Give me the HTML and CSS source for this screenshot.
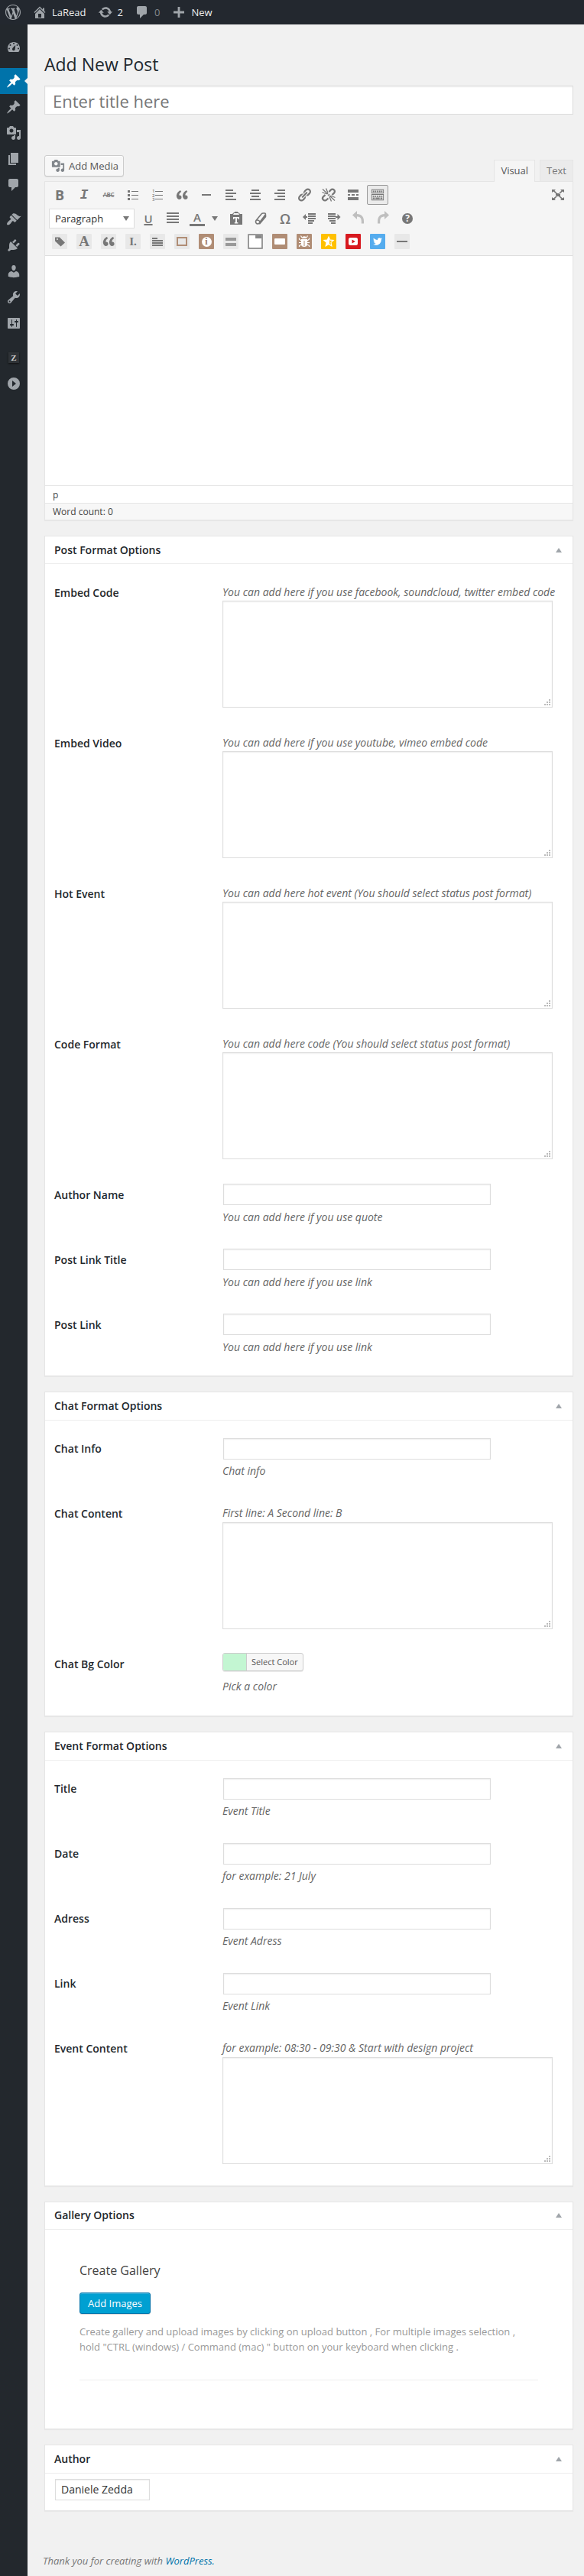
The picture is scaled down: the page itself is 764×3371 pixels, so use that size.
FILE: index.html
```html
<!DOCTYPE html>
<html lang="en">
<head>
<meta charset="utf-8">
<title>Add New Post</title>
<link rel="stylesheet" href="styles.css">
</head>
<body>
<svg class="sprite" width="0" height="0" aria-hidden="true">
  <symbol id="pin" viewBox="0 0 20 20"><path d="M10.44 3.02l1.82-1.82 6.36 6.35-1.83 1.82c-1.05-.68-2.48-.57-3.41.36l-.75.75c-.92.93-1.04 2.35-.35 3.41l-1.83 1.82-2.41-2.41-2.8 2.79c-.42.42-3.38 2.71-3.8 2.29s1.86-3.39 2.28-3.81l2.79-2.79L4.1 9.36l1.83-1.82c1.05.69 2.48.57 3.4-.36l.75-.75c.93-.92 1.05-2.35.36-3.41z"/></symbol>
  <symbol id="media" viewBox="0 0 20 20"><path fill-rule="evenodd" d="M13 11V4c0-.55-.45-1-1-1h-1.670L9 1H5L3.670 3H2c-.55 0-1 .45-1 1v7c0 .55.45 1 1 1h10c.55 0 1-.45 1-1zM7 4.500c1.380 0 2.500 1.120 2.500 2.500S8.380 9.500 7 9.500 4.500 8.380 4.500 7 5.620 4.500 7 4.500zM14 6h5v10.500c0 1.380-1.120 2.500-2.500 2.500S14 17.880 14 16.500s1.120-2.500 2.500-2.500c.17 0 .34.020.5.050V9h-3V6zm-4 8.050V13h2v3.500c0 1.380-1.120 2.500-2.500 2.500S7 17.880 7 16.500 8.120 14 9.500 14c.17 0 .34.020.5.050z"/></symbol>
  <symbol id="comment" viewBox="0 0 20 20"><path d="M5 2h9c1.100 0 2 .9 2 2v7c0 1.100-.9 2-2 2h-2l-5 5v-5H5c-1.100 0-2-.9-2-2V4c0-1.100.9-2 2-2z"/></symbol>
  <symbol id="quote" viewBox="0 0 20 20"><path d="M9.490 13.220c0-.74-.2-1.380-.61-1.900-.62-.78-1.830-.88-2.530-.72-.29-1.650 1.110-3.750 2.920-4.650L7.880 4c-2.730 1.300-5.420 4.280-4.960 8.050C3.210 14.430 4.590 16 6.540 16c.85 0 1.560-.25 2.120-.75s.83-1.180.83-2.030zm8.050 0c0-.74-.2-1.380-.61-1.900-.63-.78-1.830-.88-2.530-.72-.29-1.650 1.110-3.750 2.920-4.650L15.930 4c-2.730 1.300-5.410 4.280-4.950 8.050.29 2.380 1.660 3.950 3.610 3.950.85 0 1.560-.25 2.120-.75s.83-1.180.83-2.030z"/></symbol>
  <symbol id="grip" viewBox="0 0 10 9"><path d="M7 0h2v2H7zM4 3h2v2H4zM7 3h2v2H7zM1 6h2v2H1zM4 6h2v2H4zM7 6h2v2H7z"/></symbol>
</svg>

<header class="adminbar">
  <a class="bar-item bar-wp"><svg class="i20" viewBox="0 0 20 20"><path d="M20 10c0-5.510-4.490-10-10-10C4.480 0 0 4.490 0 10c0 5.520 4.480 10 10 10 5.510 0 10-4.480 10-10zM7.780 15.370L4.370 6.220c.55-.02 1.170-.08 1.170-.08.5-.06.44-1.130-.06-1.110 0 0-1.450.11-2.370.11-.18 0-.37 0-.58-.01C4.120 2.690 6.870 1.110 10 1.110c2.330 0 4.450.87 6.050 2.340-.68-.11-1.650.39-1.650 1.580 0 .74.45 1.360.9 2.100.35.61.55 1.360.55 2.460 0 1.490-1.400 5-1.400 5l-3.030-8.370c.54-.02.82-.17.82-.17.5-.05.44-1.250-.06-1.220 0 0-1.440.12-2.380.12-.87 0-2.330-.12-2.330-.12-.5-.03-.56 1.200-.06 1.220l.92.08 1.260 3.410zM17.410 10c.24-.64.74-1.870.43-4.250.7 1.290 1.050 2.710 1.050 4.250 0 3.290-1.730 6.240-4.400 7.780.97-2.590 1.940-5.200 2.920-7.780zM6.100 18.090C3.120 16.650 1.110 13.530 1.110 10c0-1.300.23-2.480.72-3.590C3.250 10.300 4.670 14.200 6.100 18.090zm4.030-6.630l2.580 6.980c-.86.29-1.760.45-2.710.45-.79 0-1.570-.11-2.290-.33.81-2.380 1.620-4.740 2.420-7.100z"/></svg></a>
  <a class="bar-item bar-site"><svg class="i20" viewBox="0 0 20 20"><path fill-rule="evenodd" d="M16 8.500l1.530 1.530-1.060 1.060L10 4.600l-6.470 6.490-1.060-1.060L10 2.500l4 4v-2h2v4zm-6-2.460l6 5.990V18H4v-5.970zM12 17v-5H8v5h4z"/></svg><span>LaRead</span></a>
  <a class="bar-item bar-updates"><svg class="i20" viewBox="0 0 20 20"><path d="M10.200 3.280c3.530 0 6.430 2.610 6.920 6h2.080l-3.500 4-3.500-4h2.320c-.45-1.970-2.210-3.450-4.320-3.450-1.450 0-2.730.71-3.540 1.780L4.950 5.660C6.230 4.200 8.110 3.280 10.200 3.280zm-.4 13.440c-3.520 0-6.430-2.610-6.920-6H.8l3.500-4 3.500 4H5.480c.45 1.970 2.210 3.450 4.320 3.450 1.450 0 2.730-.71 3.540-1.780l1.710 1.950c-1.280 1.460-3.150 2.380-5.250 2.380z"/></svg><span>2</span></a>
  <a class="bar-item bar-comments"><svg class="i20"><use href="#comment"/></svg><span>0</span></a>
  <a class="bar-item bar-new"><svg class="i20" viewBox="0 0 20 20"><path d="M17 8.600v2.800h-5.600V17H8.600v-5.600H3V8.600h5.600V3h2.800v5.600z"/></svg><span>New</span></a>
</header>

<div class="shell">
  <nav class="sidebar">
    <a class="nav-item"><svg class="i20" viewBox="0 0 20 20"><path fill-rule="evenodd" d="M3.760 17h12.480C17.340 15.630 18 13.890 18 12c0-4.420-3.580-8-8-8s-8 3.580-8 8c0 1.890.66 3.630 1.760 5zM10 5a1 1 0 1 1 0 2 1 1 0 1 1 0-2zM5.500 7a1 1 0 1 1 0 2 1 1 0 1 1 0-2zM14.500 7a1 1 0 1 1 0 2 1 1 0 1 1 0-2zM4 11.500a1 1 0 1 1 0 2 1 1 0 1 1 0-2zM16 11.500a1 1 0 1 1 0 2 1 1 0 1 1 0-2zM8.300 12.200c.5-.8 4-4.200 4-4.200s-.5 5.500-.8 6.300c-.4 1-1.700 1.300-2.600.8-.9-.6-1.100-1.900-.6-2.900z"/></svg></a>
    <a class="nav-item nav-gap nav-active"><svg class="i20"><use href="#pin"/></svg></a>
    <a class="nav-item"><svg class="i20"><use href="#pin"/></svg></a>
    <a class="nav-item"><svg class="i20"><use href="#media"/></svg></a>
    <a class="nav-item"><svg class="i20" viewBox="0 0 20 20"><path d="M6 15V2h10v13H6zm-1 1h8v2H3V5h2v11z"/></svg></a>
    <a class="nav-item"><svg class="i20"><use href="#comment"/></svg></a>
    <a class="nav-item nav-gap"><svg class="i20" viewBox="0 0 20 20"><path d="M14.480 11.060L7.410 3.990l1.500-1.500c.5-.56 2.300-.47 3.510.32 1.210.8 1.430 1.280 2.910 2.100 1.180.64 2.450 1.260 4.450.85zm-.71.71L6.700 4.700 4.930 6.470c-.39.39-.39 1.020 0 1.410l1.060 1.060c.39.39.39 1.030 0 1.420-.6.6-1.430 1.110-2.210 1.690-.35.26-.7.53-1.010.84C1.430 14.230.4 16.080 1.400 17.070c.99 1 2.840-.03 4.180-1.360.31-.31.58-.66.85-1.020.57-.78 1.080-1.610 1.690-2.210.39-.39 1.020-.39 1.410 0l1.060 1.060c.39.39 1.020.39 1.410 0z"/></svg></a>
    <a class="nav-item"><svg class="i20" viewBox="0 0 20 20"><path d="M13.110 4.360L9.870 7.600 8 5.730l3.240-3.240c.35-.34 1.050-.2 1.560.32.52.51.66 1.210.31 1.550zm-8 1.770l.91-1.120 9.010 9.010-1.190.84c-.71.71-2.630 1.160-3.820 1.160H6.140L4.900 17.260c-.59.59-1.540.59-2.120 0-.59-.58-.59-1.530 0-2.120l1.240-1.240v-3.880c0-1.130.4-3.190 1.090-3.890zm7.260 3.970l3.240-3.240c.34-.35 1.040-.21 1.550.31.52.51.66 1.210.31 1.550l-3.240 3.250z"/></svg></a>
    <a class="nav-item"><svg class="i20" viewBox="0 0 20 20"><path d="M10 9.250c-2.270 0-2.730-3.440-2.730-3.440C7 4.020 7.820 2 9.970 2c2.160 0 2.980 2.020 2.710 3.810 0 0-.41 3.440-2.680 3.440zm0 2.570L12.720 10c2.390 0 4.520 2.330 4.520 4.530v2.490s-3.650 1.130-7.240 1.130c-3.650 0-7.240-1.130-7.240-1.130v-2.490c0-2.250 1.940-4.480 4.470-4.480z"/></svg></a>
    <a class="nav-item"><svg class="i20" viewBox="0 0 20 20"><path fill-rule="evenodd" d="M16.680 9.770c-1.340 1.340-3.300 1.670-4.950.99l-5.410 6.520c-.99.99-2.590.99-3.580 0s-.99-2.590 0-3.570l6.520-5.420c-.68-1.650-.35-3.610.99-4.950 1.280-1.280 3.120-1.620 4.720-1.060l-2.890 2.890 2.820 2.820 2.860-2.870c.53 1.580.18 3.390-1.080 4.650zM3.810 16.210c.4.39 1.040.39 1.430 0 .4-.4.4-1.040 0-1.430-.39-.4-1.030-.4-1.430 0-.39.39-.39 1.030 0 1.430z"/></svg></a>
    <a class="nav-item"><svg class="i20" viewBox="0 0 20 20"><path fill-rule="evenodd" d="M18 16V4c0-.55-.45-1-1-1H3c-.55 0-1 .45-1 1v12c0 .55.45 1 1 1h14c.55 0 1-.45 1-1zM8 11h1c.55 0 1 .45 1 1s-.45 1-1 1H8v1.500c0 .28-.22.5-.5.5s-.5-.22-.5-.5V13H6c-.55 0-1-.45-1-1s.45-1 1-1h1V5.500c0-.28.22-.5.5-.5s.5.22.5.5V11zm5-2h-1c-.55 0-1-.45-1-1s.45-1 1-1h1V5.500c0-.28.22-.5.5-.5s.5.22.5.5V7h1c.55 0 1 .45 1 1s-.45 1-1 1h-1v5.500c0 .28-.22.5-.5.5s-.5-.22-.5-.5V9z"/></svg></a>
    <a class="nav-item nav-gap"><span class="nav-z">Z</span></a>
    <a class="nav-item"><svg class="i20" viewBox="0 0 20 20"><path fill-rule="evenodd" d="M10 2a8 8 0 1 1 0 16 8 8 0 1 1 0-16zM8 6v8l5-4z"/></svg></a>
  </nav>

  <main class="content">
    <h1 class="page-title">Add New Post</h1>
    <div class="title-input">Enter title here</div>

    <div class="editor-tools">
      <a class="media-button"><svg class="i18"><use href="#media"/></svg><span>Add Media</span></a>
      <div class="tabs"><a class="tab tab-on">Visual</a><a class="tab">Text</a></div>
    </div>

    <section class="editor">
      <div class="toolbar">
        <div class="tool-row row-one">
          <b class="tool glyph-b">B</b>
          <i class="tool glyph-i">I</i>
          <span class="tool glyph-abc">ABC</span>
          <svg class="tool" viewBox="0 0 20 20"><path d="M3 4h3v3H3zM3 9h3v3H3zM3 14h3v3H3zM8 5h9v1H8zM8 10h9v1H8zM8 15h9v1H8z"/></svg>
          <svg class="tool" viewBox="0 0 20 20"><path d="M7 5h10v1H7zM7 10h10v1H7zM7 15h10v1H7z"/><g font-family="Open Sans, sans-serif" font-size="6" font-weight="600"><text x="3" y="7">1</text><text x="3" y="12.500">2</text><text x="3" y="18">3</text></g></svg>
          <svg class="tool"><use href="#quote"/></svg>
          <svg class="tool" viewBox="0 0 20 20"><path d="M4 9h12v2H4z"/></svg>
          <svg class="tool" viewBox="0 0 20 20"><path d="M3 3h10v2H3zM3 7h14v2H3zM3 11h10v2H3zM3 15h14v2H3z"/></svg>
          <svg class="tool" viewBox="0 0 20 20"><path d="M5 3h10v2H5zM3 7h14v2H3zM5 11h10v2H5zM3 15h14v2H3z"/></svg>
          <svg class="tool" viewBox="0 0 20 20"><path d="M7 3h10v2H7zM3 7h14v2H3zM7 11h10v2H7zM3 15h14v2H3z"/></svg>
          <svg class="tool" viewBox="0 0 20 20"><path fill-rule="evenodd" d="M17.740 2.760c1.680 1.690 1.680 4.410 0 6.100l-1.530 1.520c-1.120 1.120-2.700 1.470-4.140 1.090l2.620-2.610 1.520-1.530c.84-.84.84-2.200 0-3.040-.84-.85-2.200-.85-3.040 0l-.77.76-3.380 3.380c-.37-1.440-.02-3.020 1.100-4.140l1.520-1.530c1.690-1.680 4.420-1.680 6.100 0zM8.590 13.430l5.340-5.340c.42-.42.42-1.100 0-1.520-.44-.43-1.130-.39-1.530 0l-5.330 5.340c-.42.42-.42 1.100 0 1.520.44.43 1.130.39 1.520 0zm-.76 2.290l4.140-4.150c.38 1.440.03 3.020-1.090 4.140l-1.520 1.530c-1.690 1.680-4.410 1.680-6.100 0-1.680-1.680-1.680-4.420 0-6.100l1.530-1.520c1.120-1.120 2.700-1.470 4.140-1.100l-4.140 4.150c-.85.84-.85 2.200 0 3.050.84.84 2.200.84 3.040 0z"/></svg>
          <svg class="tool line" viewBox="0 0 20 20"><g stroke-width="2.300"><path d="M10.500 6l2.300-2.500c1.200-1.200 3-1.200 4.200 0s1.200 3 0 4.200L14.500 10M9.500 14.500l-2.300 2c-1.200 1.200-3 1.200-4.200 0s-1.200-3 0-4.200L5.500 10"/></g><path stroke-width="1.300" d="M9 9L2 2.500M9 7.500L6.500 1.500M7.500 9L1.500 6.500M11 11l7 6.500M11 12.500l2.500 6M12.500 11l6 2.500M9 11l2-2"/></svg>
          <svg class="tool" viewBox="0 0 20 20"><path d="M3 3h14v4H3zM3 9h3v2H3zM8 9h4v2H8zM14 9h3v2h-3zM3 13h14v4H3z"/></svg>
          <svg class="tool tool-on" viewBox="0 0 20 20"><path fill-rule="evenodd" d="M1 2h18v6H1zM2 3v4h16V3zM1 9h18v9H1zM2 10v7h16v-7z"/><path d="M3 4h2v2H3zM6 4h2v2H6zM9 4h2v2H9zM12 4h2v2h-2zM15 4h2v2h-2zM3 11h2v2H3zM6 11h2v2H6zM9 11h2v2H9zM12 11h2v2h-2zM15 11h2v2h-2zM3 14h3v2H3zM7 14h6v2H7zM14 14h3v2h-3z"/></svg>
          <svg class="tool tool-end" viewBox="0 0 20 20"><path d="M7 8h6v4H7zM2 3h5L5.500 4.500 9 8 8 9 4 5.500 2 7zM18 3h-5l1.500 1.500L11 8l1 1 4-3.500L18 7zM2 17h5l-1.500-1.500L9 12l-1-1-4 3.500L2 13zM18 17h-5l1.500-1.500L11 12l1-1 4 3.500 2-1.500z"/></svg>
        </div>
        <div class="tool-row row-two">
          <div class="format-select"><span>Paragraph</span><svg width="8" height="6" viewBox="0 0 8 6"><path d="M0 0h8L4 6z"/></svg></div>
          <span class="tool glyph-u">U</span>
          <svg class="tool" viewBox="0 0 20 20"><path d="M2 2h16v2H2zM2 6h16v2H2zM2 10h16v2H2zM2 14h16v2H2z"/></svg>
          <span class="tool glyph-a">A</span>
          <svg class="caret" width="8" height="6" viewBox="0 0 8 6"><path d="M0 0h8L4 6z"/></svg>
          <svg class="tool" viewBox="0 0 20 20"><path fill-rule="evenodd" d="M2 4h3l2-2h1V1h4v1h1l2 2h3v14H2zM6 5h8l-1-2H7zM6 8v3h1.500V9.500h1.500V15H7.800v1.500h4.600V15H11V9.500h1.500V11H14V8z"/></svg>
          <svg class="tool line" viewBox="0 0 20 20"><path stroke-width="1.600" d="M4 12.500L11 4c.6-.8 1.500-1 2.500-1H15c1.500 0 1.800 1.300 1 2.300L9 14.500M4 12.500c-1 1.500-.5 4.500 2 4.500 1.800 0 3-1.500 3-2.500 0-1.500-3-3.500-5-2z"/><path stroke-width="2.500" d="M8 17l8-9.500V5"/></svg>
          <span class="tool glyph-omega">Ω</span>
          <svg class="tool" viewBox="0 0 20 20"><path d="M8 3h10v2H8zM8 6h10v2H8zM8 9h10v2H8zM8 12h8v2H8zM8 15h6v2H8zM1 8l4-4v3h2v2H5v3z"/></svg>
          <svg class="tool" viewBox="0 0 20 20"><path d="M2 3h10v2H2zM2 6h10v2H2zM2 9h10v2H2zM4 12h8v2H4zM6 15h6v2H6zM18.500 8l-4-4v3H12v2h2.500v3z"/></svg>
          <svg class="tool faded" viewBox="0 0 20 20"><path d="M8 0v4c6 0 9 4 9 9.500v3h-3.200v-3C13.800 9.500 12 7.500 8 7.500V11L2 5.500z"/></svg>
          <svg class="tool faded" viewBox="0 0 20 20"><path d="M12 0v4c-6 0-9 4-9 9.500v3h3.200v-3C6.200 9.500 8 7.500 12 7.500V11l6-5.500z"/></svg>
          <span class="tool glyph-help"><span>?</span></span>
        </div>
        <div class="tool-row row-three">
          <span class="tile"><svg class="tile-icon" viewBox="0 0 20 20"><path fill-rule="evenodd" d="M4 4.500h6l7 7-5.500 5-7.500-7zM7 6a1 1 0 1 0 0 2 1 1 0 1 0 0-2z"/></svg></span>
          <span class="tile serif-a">A</span>
          <span class="tile"><svg class="tile-icon"><use href="#quote"/></svg></span>
          <span class="tile serif-i">I.</span>
          <span class="tile"><svg class="tile-icon" viewBox="0 0 20 20"><path d="M3 5h7v2H3zM3 8h14v2H3zM3 11h14v2H3zM3 14h14v2H3z"/></svg></span>
          <span class="tile"><svg class="tile-icon line tan-line" viewBox="0 0 20 20"><path stroke-width="2" d="M4 5h12v10H4z"/></svg></span>
          <span class="tile tan"><span class="info-dot">i</span></span>
          <span class="tile"><svg class="tile-icon bars" viewBox="0 0 20 20"><path d="M3 5h14v4H3zM3 12h14v4H3z"/></svg></span>
          <span class="tile tabs-tile"><svg class="tile-icon white" viewBox="0 0 20 20"><path d="M2 2h8v4h8v11c0 .6-.4 1-1 1H3c-.6 0-1-.4-1-1z"/><path fill="#888" d="M10.500 2H18v4h-7.500z"/></svg></span>
          <span class="tile tan"><svg class="tile-icon white" viewBox="0 0 20 20"><rect x="3" y="6" width="14" height="8" rx="1"/></svg></span>
          <span class="tile tan"><svg class="tile-icon white" viewBox="0 0 20 20"><path d="M7 6c0-2 1.300-2.700 3-2.700S13 4 13 6zM6 7h8v7c0 2-1.600 3-4 3s-4-1-4-3z"/><path class="line white-line" d="M7 5L5.500 2.500M13 5l1.500-2.500M6 9L3.500 7V5.500M14 9l2.500-2V5.500M6 11.500H3M14 11.500h3M6 14l-2.500 1.500V17M14 14l2.500 1.500V17"/><path fill="#b08d75" d="M9.500 9h1v7h-1z"/></svg></span>
          <span class="tile gold"><svg class="tile-icon white" viewBox="0 0 20 20"><path fill-rule="evenodd" d="M10 2.500l2.200 5 5.300.5-4 3.600 1.200 5.400L10 14.200 5.300 17l1.200-5.400L2.500 8l5.300-.5zM11 6.500v6.800l2 1.200-.6-3.400 2.300-2-3-.3z"/></svg></span>
          <span class="tile red"><svg class="tile-icon white" viewBox="0 0 20 20"><path fill-rule="evenodd" d="M6.500 5h7c2 0 2.500 1 2.500 2.500v5c0 1.500-.5 2.500-2.500 2.500h-7C4.500 15 4 14 4 12.500v-5C4 6 4.500 5 6.500 5zM8.500 7.500v5l4.300-2.500z"/></svg></span>
          <span class="tile blue"><svg class="tile-icon white" viewBox="-5 -5 30 30"><path d="M18.940 4.460c-.49.73-1.110 1.380-1.830 1.900.01.15.01.31.01.47 0 4.850-3.690 10.440-10.430 10.440-2.070 0-4-.61-5.630-1.650 2 .2 3.900-.4 5.430-1.520-1.600-.03-2.950-1.090-3.420-2.550.56.1 1.120.08 1.650-.06-1.670-.34-2.940-1.820-2.940-3.640.5.270 1.060.44 1.660.46-1.650-1.150-2.100-3.250-1.130-4.900 1.810 2.220 4.510 3.680 7.560 3.830-.5-2.400 1.300-4.500 3.570-4.500 1.060 0 2.010.44 2.680 1.160.83-.17 1.620-.47 2.330-.89-.28.85-.86 1.570-1.620 2.020.75-.08 1.450-.28 2.110-.57z"/></svg></span>
          <span class="tile"><svg class="tile-icon" viewBox="0 0 20 20"><path d="M3 9h14v2H3z"/></svg></span>
        </div>
      </div>
      <div class="editor-body"></div>
      <div class="editor-path">p</div>
      <div class="editor-status">Word count: 0</div>
    </section>

    <section class="postbox">
      <h2 class="box-head head-short"><span>Post Format Options</span><svg class="toggle" viewBox="0 0 8 6"><path d="M4 0l4 6H0z"/></svg></h2>
      <div class="fields">
        <div class="field field-area"><span class="label">Embed Code</span><div class="control"><p class="hint">You can add here if you use facebook, soundcloud, twitter embed code</p><div class="area"><svg class="grip"><use href="#grip"/></svg></div></div></div>
        <div class="field field-area"><span class="label">Embed Video</span><div class="control"><p class="hint">You can add here if you use youtube, vimeo embed code</p><div class="area"><svg class="grip"><use href="#grip"/></svg></div></div></div>
        <div class="field field-area"><span class="label">Hot Event</span><div class="control"><p class="hint">You can add here hot event (You should select status post format)</p><div class="area"><svg class="grip"><use href="#grip"/></svg></div></div></div>
        <div class="field field-area"><span class="label">Code Format</span><div class="control"><p class="hint">You can add here code (You should select status post format)</p><div class="area"><svg class="grip"><use href="#grip"/></svg></div></div></div>
        <div class="field"><span class="label">Author Name</span><div class="control"><div class="text-input"></div><p class="hint">You can add here if you use quote</p></div></div>
        <div class="field"><span class="label">Post Link Title</span><div class="control"><div class="text-input"></div><p class="hint">You can add here if you use link</p></div></div>
        <div class="field"><span class="label">Post Link</span><div class="control"><div class="text-input"></div><p class="hint">You can add here if you use link</p></div></div>
      </div>
    </section>

    <section class="postbox">
      <h2 class="box-head"><span>Chat Format Options</span><svg class="toggle" viewBox="0 0 8 6"><path d="M4 0l4 6H0z"/></svg></h2>
      <div class="fields fields-raised">
        <div class="field"><span class="label">Chat Info</span><div class="control"><div class="text-input"></div><p class="hint">Chat info</p></div></div>
        <div class="field field-area"><span class="label">Chat Content</span><div class="control"><p class="hint">First line: A Second line: B</p><div class="area"><svg class="grip"><use href="#grip"/></svg></div></div></div>
        <div class="field field-color"><span class="label">Chat Bg Color</span><div class="control"><a class="color-button"><span class="swatch"></span><span class="color-text">Select Color</span></a><p class="hint">Pick a color</p></div></div>
      </div>
    </section>

    <section class="postbox">
      <h2 class="box-head"><span>Event Format Options</span><svg class="toggle" viewBox="0 0 8 6"><path d="M4 0l4 6H0z"/></svg></h2>
      <div class="fields fields-raised">
        <div class="field"><span class="label">Title</span><div class="control"><div class="text-input"></div><p class="hint">Event Title</p></div></div>
        <div class="field"><span class="label">Date</span><div class="control"><div class="text-input"></div><p class="hint">for example: 21 July</p></div></div>
        <div class="field"><span class="label">Adress</span><div class="control"><div class="text-input"></div><p class="hint">Event Adress</p></div></div>
        <div class="field"><span class="label">Link</span><div class="control"><div class="text-input"></div><p class="hint">Event Link</p></div></div>
        <div class="field field-area"><span class="label">Event Content</span><div class="control"><p class="hint">for example: 08:30 - 09:30 &amp; Start with design project</p><div class="area"><svg class="grip"><use href="#grip"/></svg></div></div></div>
      </div>
    </section>

    <section class="postbox">
      <h2 class="box-head head-short head-raised"><span>Gallery Options</span><svg class="toggle" viewBox="0 0 8 6"><path d="M4 0l4 6H0z"/></svg></h2>
      <div class="gallery">
        <div class="gallery-inner">
          <h3 class="gallery-title">Create Gallery</h3>
          <a class="primary-button">Add Images</a>
          <p class="gallery-text">Create gallery and upload images by clicking on upload button , For multiple images selection ,<br>hold "CTRL (windows) / Command (mac) " button on your keyboard when clicking .</p>
        </div>
      </div>
    </section>

    <section class="postbox">
      <h2 class="box-head"><span>Author</span><svg class="toggle" viewBox="0 0 8 6"><path d="M4 0l4 6H0z"/></svg></h2>
      <div class="author-body"><div class="author-select">Daniele Zedda</div></div>
    </section>

    <footer class="footer">Thank you for creating with <a>WordPress.</a></footer>
  </main>
</div>
</body>
</html>
```

FILE: styles.css
```css
* { box-sizing: border-box; }
body {
  margin: 0;
  background: #f1f1f1;
  color: #444;
  font: 13px/18px "Open Sans", sans-serif;
}
h1, h2, h3, p { margin: 0; }
svg { display: block; fill: currentColor; flex: none; }
.sprite { position: absolute; }
.i20 { width: 20px; height: 20px; }
.i18 { width: 18px; height: 18px; }
.line { fill: none; stroke: currentColor; }

/* Admin bar */
.adminbar {
  display: flex;
  align-items: center;
  height: 32px;
  padding-left: 7px;
  background: #23282f;
  color: #a0a5aa;
}
.bar-item { display: flex; align-items: center; gap: 6px; line-height: 32px; }
.bar-item span { color: #eee; }
.bar-site { margin-left: 15px; }
.bar-updates { margin-left: 15px; }
.bar-comments { margin-left: 15px; }
.bar-comments span { color: #82878c; }
.bar-new { margin-left: 15px; }

/* Side menu */
.shell { display: flex; height: 3339px; }
.sidebar {
  flex: none;
  width: 36px;
  padding-top: 12px;
  background: #23282d;
  color: #a0a5aa;
}
.nav-item {
  display: flex;
  align-items: center;
  justify-content: center;
  height: 34px;
}
.nav-gap { margin-top: 11px; }
.nav-active { position: relative; background: #0073aa; color: #fff; }
.nav-active::after {
  content: "";
  position: absolute;
  right: 0;
  top: 13px;
  border: 4px solid transparent;
  border-left-width: 0;
  border-right-color: #f1f1f1;
}
.nav-z {
  width: 14px;
  height: 14px;
  background: #2f3337;
  box-shadow: 0 1px 2px #111;
  color: #ccc;
  font: bold 11px/14px "Liberation Serif", serif;
  text-align: center;
}

/* Page heading */
.content { flex: none; width: 692px; margin-left: 22px; }
.page-title {
  padding-top: 38px;
  height: 80px;
  color: #23282d;
  font-size: 23px;
  font-weight: 400;
  line-height: 29px;
}
.title-input {
  height: 38px;
  padding: 0 10px;
  border: 1px solid #ddd;
  background: #fff;
  box-shadow: inset 0 1px 2px rgba(0, 0, 0, .07);
  color: #777;
  font-size: 22px;
  line-height: 38px;
}

/* Editor */
.editor-tools {
  display: flex;
  justify-content: space-between;
  height: 87px;
  padding-top: 53px;
}
.media-button {
  display: flex;
  align-items: center;
  gap: 5px;
  width: 104px;
  height: 28px;
  padding-left: 8px;
  border: 1px solid #ccc;
  border-radius: 3px;
  background: #f7f7f7;
  box-shadow: 0 1px 0 #fff inset, 0 1px 0 rgba(0, 0, 0, .08);
  color: #555;
}
.media-button svg { color: #82878c; }
.tabs { display: flex; gap: 6px; padding-top: 6px; position: relative; }
.tab {
  height: 28px;
  padding: 0 8px;
  border: 1px solid #e5e5e5;
  border-bottom: 0;
  background: #ebebeb;
  color: #777;
  line-height: 27px;
}
.tab-on { height: 29px; background: #f5f5f5; color: #555; }
.editor {
  height: 444px;
  border: 1px solid #e5e5e5;
  background: #fff;
  box-shadow: 0 1px 1px rgba(0, 0, 0, .04);
}
.toolbar {
  height: 97px;
  border-bottom: 1px solid #ddd;
  background: #f5f5f5;
  color: #777;
}
.tool-row { display: flex; align-items: center; }
.tool { width: 20px; height: 20px; line-height: 20px; text-align: center; }
.row-one { height: 34px; padding: 0 9px; gap: 12px; }
.row-two { height: 28px; padding-left: 5px; }
.row-three { height: 32px; padding-left: 9px; gap: 12px; }
.glyph-b { font-size: 18px; }
.glyph-i { font: italic bold 18px/20px "Liberation Mono", monospace; }
.glyph-abc { font-size: 8px; font-weight: 600; letter-spacing: -.3px; text-decoration: line-through; }
.tool-on {
  width: 28px;
  height: 26px;
  margin: 0 -4px;
  padding: 2px 4px;
  border: 1px solid #999;
  border-radius: 2px;
  background: #ebebeb;
}
.tool-end { margin-left: auto; }
.format-select {
  display: flex;
  align-items: center;
  justify-content: space-between;
  width: 112px;
  height: 26px;
  padding: 0 6px 0 7px;
  border: 1px solid #ddd;
  background: #fff;
  color: #333;
}
.format-select svg { color: #777; }
.row-two .tool { margin-left: 12px; }
.row-two .format-select + .tool { margin-left: 8px; }
.glyph-u { font-size: 15px; font-weight: 600; text-decoration: underline; text-decoration-thickness: 2px; }
.row-two .glyph-a { border-bottom: 3px solid #777; font-size: 15px; font-weight: 600; line-height: 16px; }
.caret { margin-left: 9px; }
.row-two .caret + .tool { margin-left: 14px; }
.glyph-omega { font-size: 18px; font-weight: 600; }
.faded { opacity: .42; }
.glyph-help { display: flex; align-items: center; justify-content: center; }
.glyph-help span {
  width: 14px;
  height: 14px;
  border-radius: 7px;
  background: #777;
  color: #f5f5f5;
  font-size: 12px;
  font-weight: 700;
  line-height: 14px;
}
.tile {
  display: flex;
  align-items: center;
  justify-content: center;
  width: 20px;
  height: 20px;
  border-radius: 1px;
  background: #e8e8e8;
  color: #777;
}
.tile-icon { width: 20px; height: 20px; }
.serif-a { font: bold 19px/20px "Liberation Serif", serif; }
.serif-i { font: bold 15px/20px "Liberation Serif", serif; }
.bars { color: #999; }
.tan-line { color: #b08d75; }
.tan { background: #b08d75; }
.gold { background: #ffc000; }
.red { background: #d7191f; }
.blue { background: #55acee; }
.tabs-tile { background: #999; }
.white { color: #fff; }
.white-line { stroke: #fff; stroke-width: 1.2; }
.info-dot {
  width: 13px;
  height: 13px;
  border-radius: 7px;
  background: #fff;
  color: #a07d65;
  font: bold 12px/13px "Liberation Serif", serif;
  text-align: center;
}
.editor-body { height: 300px; }
.editor-path { height: 23px; padding: 2px 10px; border-top: 1px solid #e5e5e5; font-size: 12px; line-height: 20px; }
.editor-status { height: 22px; padding: 0 10px; border-top: 1px solid #e5e5e5; background: #f7f7f7; font-size: 12px; line-height: 21px; }

/* Option boxes */
.postbox {
  margin-top: 20px;
  border: 1px solid #e5e5e5;
  background: #fff;
  box-shadow: 0 1px 1px rgba(0, 0, 0, .04);
}
.box-head {
  display: flex;
  align-items: center;
  justify-content: space-between;
  height: 37px;
  padding: 0 14px 0 12px;
  border-bottom: 1px solid #eee;
  color: #23282d;
  font-size: 14px;
  font-weight: 600;
  line-height: 20px;
}
.head-short { height: 36px; }
.head-raised { padding-bottom: 2px; }
.toggle { width: 8px; height: 6px; color: #a0a5aa; }
.fields { padding-bottom: 19px; }
.field {
  display: grid;
  grid-template-columns: 220px 1fr;
  height: 85px;
  padding-left: 12px;
}
.field-area { height: 197px; }
.label { padding-top: 28px; color: #23282d; font-size: 14px; font-weight: 600; line-height: 20px; }
.control { padding-top: 23px; }
.hint { color: #666; font-size: 14px; font-style: italic; line-height: 20px; white-space: nowrap; }
.field-area .control { padding-top: 27px; }
.field-area .hint { height: 21px; }
.fields-raised .label { padding-top: 27px; }
.fields-raised .text-input { margin-bottom: 5px; }
.fields-raised .field-area .control { padding-top: 26px; }
.fields-raised .field-area .hint { height: 22px; }
.field-color .control { padding-top: 22px; }
.area, .text-input {
  border: 1px solid #ddd;
  background: #fff;
  box-shadow: inset 0 1px 2px rgba(0, 0, 0, .07);
}
.area { position: relative; width: 432px; height: 140px; }
.grip { position: absolute; right: 1px; bottom: 1px; width: 10px; height: 9px; color: #bbb; }
.text-input { width: 350px; height: 28px; margin: 0 0 6px 1px; }
.color-button {
  display: flex;
  width: 106px;
  height: 24px;
  margin-bottom: 10px;
  border: 1px solid #ccc;
  border-radius: 3px;
  background: #f7f7f7;
  box-shadow: 0 1px 0 rgba(0, 0, 0, .08);
  color: #555;
  font-size: 11px;
  line-height: 22px;
}
.swatch { width: 31px; border-right: 1px solid #ccc; border-radius: 2px 0 0 2px; background: #c3f6d2; }
.color-text { padding-left: 6px; }

/* Gallery */
.gallery { height: 260px; padding: 0 45px; }
.gallery-inner { height: 197px; border-bottom: 1px solid #eee; }
.gallery-title { padding-top: 42px; color: #444; font-size: 16px; font-weight: 400; line-height: 22px; }
.primary-button {
  display: block;
  width: 93px;
  height: 28px;
  margin-top: 18px;
  border: 1px solid #0073aa;
  border-radius: 3px;
  background: #00a0d2;
  box-shadow: inset 0 1px 0 rgba(120, 200, 230, .5), 0 1px 0 rgba(0, 0, 0, .15);
  color: #fff;
  line-height: 27px;
  text-align: center;
}
.gallery-text { padding-top: 13px; color: #999; line-height: 20px; white-space: nowrap; }

/* Author */
.author-body { height: 48px; padding: 7px 13px; }
.author-select {
  width: 124px;
  height: 28px;
  padding-left: 7px;
  border: 1px solid #ddd;
  box-shadow: inset 0 1px 2px rgba(0, 0, 0, .07);
  color: #333;
  font-size: 14px;
  line-height: 26px;
}
.footer { margin: 55px 0 0 -2px; color: #777; font-size: 13px; font-style: italic; line-height: 20px; }
.footer a { color: #0073aa; }
```
